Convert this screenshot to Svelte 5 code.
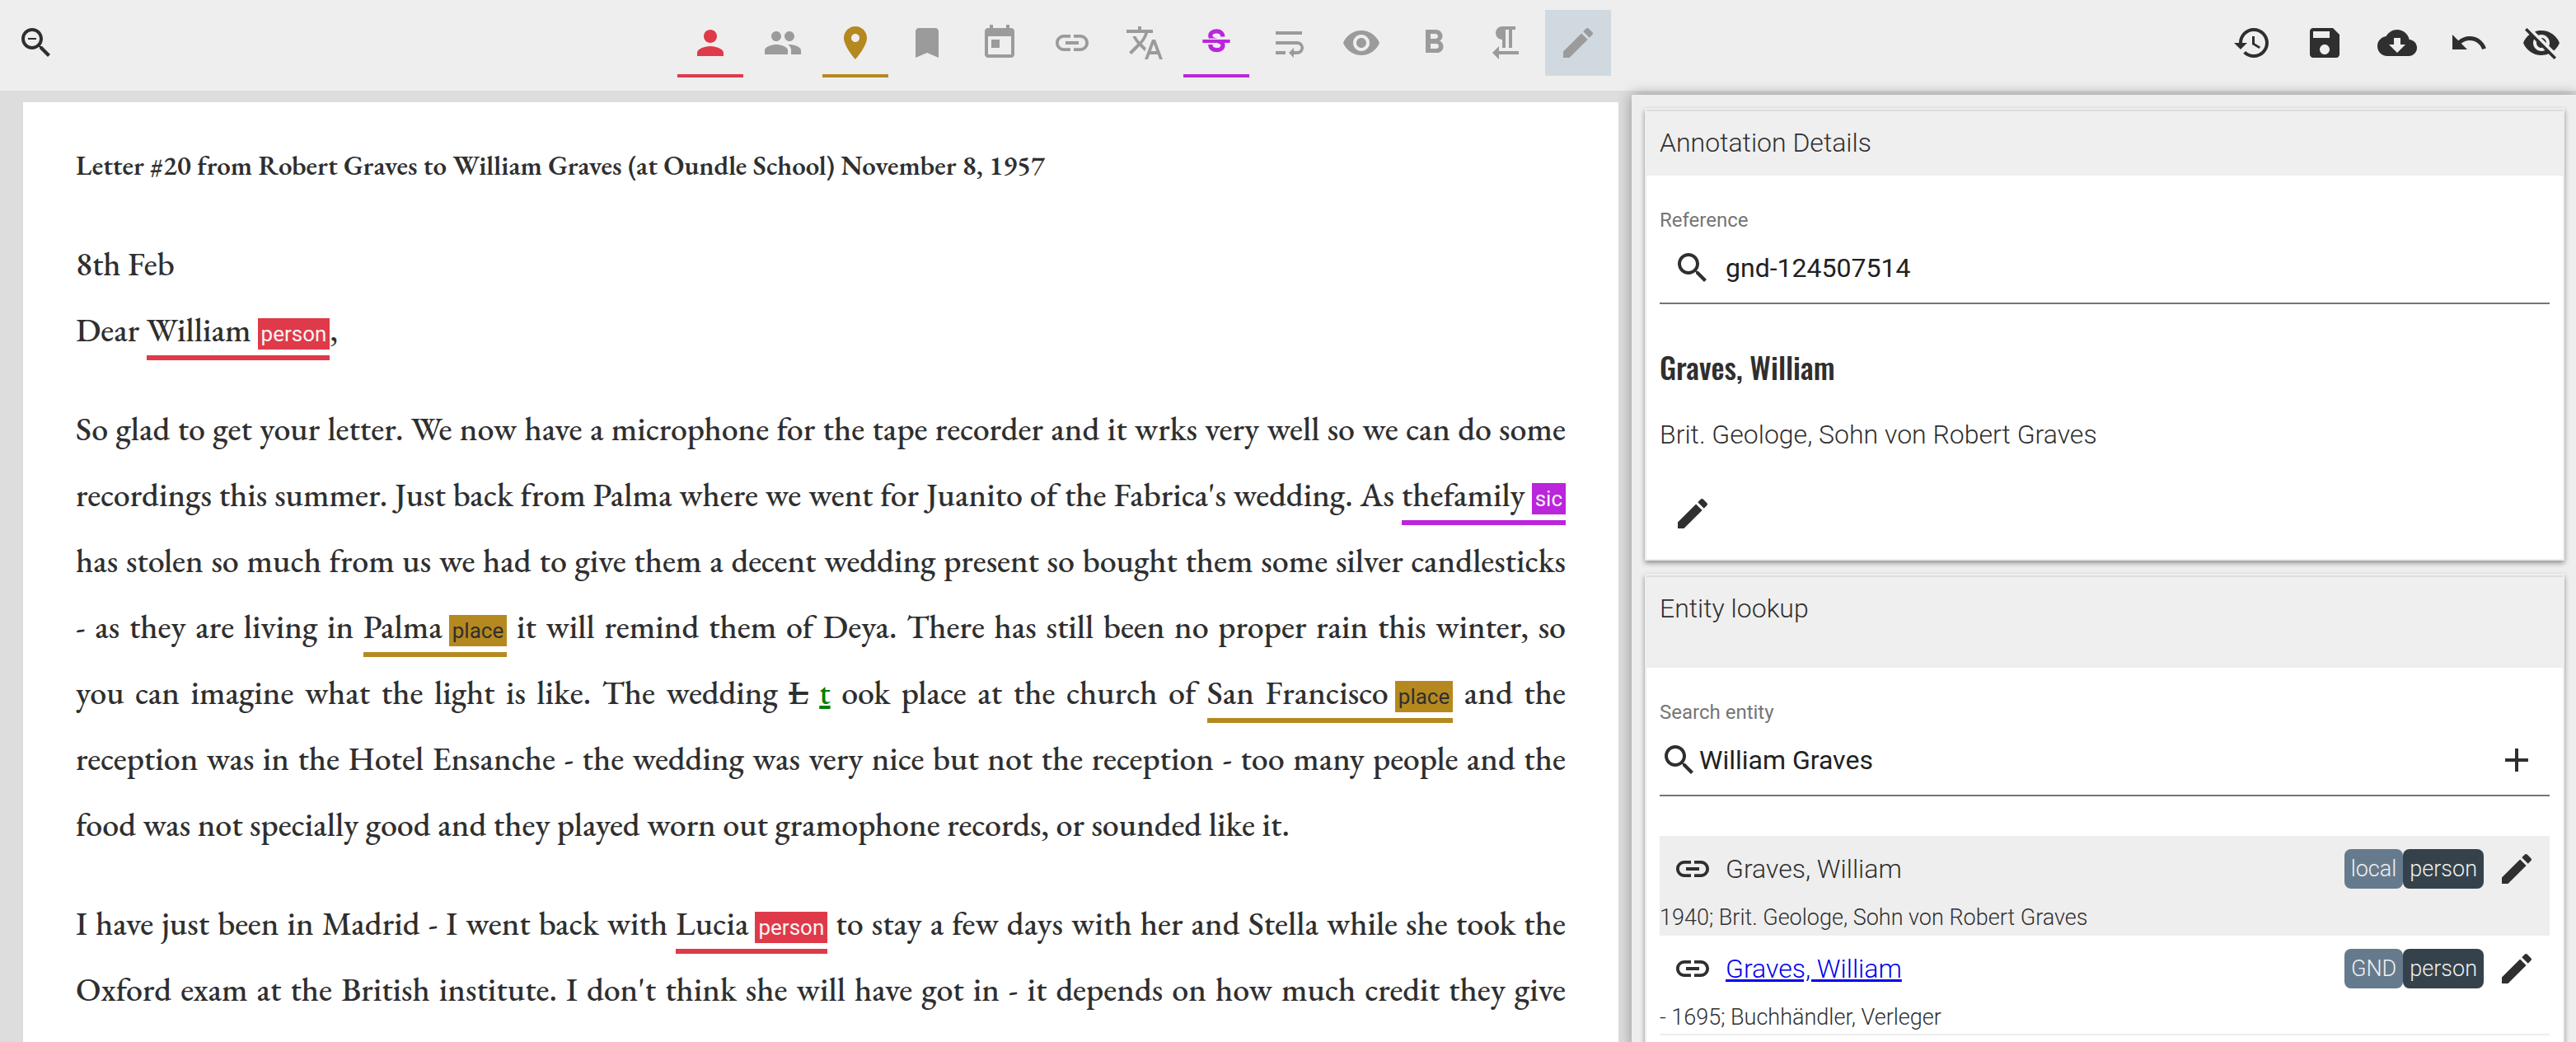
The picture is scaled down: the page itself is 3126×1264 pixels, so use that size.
<script>
  const icons = {
    zoomOut: 'M15.5 14h-.79l-.28-.27C15.41 12.59 16 11.11 16 9.5 16 5.91 13.09 3 9.5 3S3 5.91 3 9.5 5.91 16 9.5 16c1.61 0 3.09-.59 4.23-1.57l.27.28v.79l5 4.99L20.49 19l-4.99-5zm-6 0C7.01 14 5 11.99 5 9.5S7.01 5 9.5 5 14 7.01 14 9.5 11.99 14 9.5 14zM7 9h5v1H7z',
    person: 'M12 12c2.21 0 4-1.79 4-4s-1.79-4-4-4-4 1.79-4 4 1.79 4 4 4zm0 2c-2.67 0-8 1.34-8 4v2h16v-2c0-2.66-5.33-4-8-4z',
    people: 'M16 11c1.66 0 2.99-1.34 2.99-3S17.66 5 16 5c-1.66 0-3 1.34-3 3s1.34 3 3 3zm-8 0c1.66 0 2.99-1.34 2.99-3S9.66 5 8 5C6.34 5 5 6.34 5 8s1.34 3 3 3zm0 2c-2.33 0-7 1.17-7 3.5V19h14v-2.5c0-2.33-4.67-3.5-7-3.5zm8 0c-.29 0-.62.02-.97.05 1.16.84 1.97 1.97 1.97 3.45V19h6v-2.5c0-2.33-4.67-3.5-7-3.5z',
    place: 'M12 2C8.13 2 5 5.13 5 9c0 5.25 7 13 7 13s7-7.75 7-13c0-3.87-3.13-7-7-7zm0 9.5c-1.38 0-2.5-1.12-2.5-2.5s1.12-2.5 2.5-2.5 2.5 1.12 2.5 2.5-1.12 2.5-2.5 2.5z',
    bookmark: 'M17 3H7c-1.1 0-1.99.9-1.99 2L5 21l7-3 7 3V5c0-1.1-.9-2-2-2z',
    today: 'M19 3h-1V1h-2v2H8V1H6v2H5c-1.11 0-1.99.9-1.99 2L3 19c0 1.1.89 2 2 2h14c1.1 0 2-.9 2-2V5c0-1.1-.9-2-2-2zm0 16H5V8h14v11zM7 10h5v5H7z',
    link: 'M3.9 12c0-1.71 1.39-3.1 3.1-3.1h4V7H7c-2.76 0-5 2.24-5 5s2.24 5 5 5h4v-1.9H7c-1.71 0-3.1-1.39-3.1-3.1zM8 13h8v-2H8v2zm9-6h-4v1.9h4c1.71 0 3.1 1.39 3.1 3.1s-1.39 3.1-3.1 3.1h-4V17h4c2.76 0 5-2.24 5-5s-2.24-5-5-5z',
    translate: 'M12.87 15.07l-2.54-2.51.03-.03c1.74-1.94 2.98-4.17 3.71-6.53H17V4h-7V2H8v2H1v1.99h11.17C11.5 7.92 10.44 9.75 9 11.35 8.07 10.32 7.3 9.19 6.69 8h-2c.73 1.63 1.73 3.17 2.98 4.56l-5.09 5.02L4 19l5-5 3.11 3.11.76-2.04zM18.5 10h-2L12 22h2l1.12-3h4.75L21 22h2l-4.5-12zm-2.62 7l1.62-4.33L19.12 17h-3.24z',
    wrap: 'M4 19h6v-2H4v2zM20 5H4v2h16V5zm-3 6H4v2h13.25c1.1 0 2 .9 2 2s-.9 2-2 2H15v-2l-3 3 3 3v-2h2c2.21 0 4-1.79 4-4s-1.79-4-4-4z',
    eye: 'M12 4.5C7 4.5 2.73 7.61 1 12c1.73 4.39 6 7.5 11 7.5s9.27-3.11 11-7.5c-1.73-4.39-6-7.5-11-7.5zM12 17c-2.76 0-5-2.24-5-5s2.24-5 5-5 5 2.24 5 5-2.24 5-5 5zm0-8c-1.66 0-3 1.34-3 3s1.34 3 3 3 3-1.34 3-3-1.34-3-3-3z',
    bold: 'M15.6 10.79c.97-.67 1.65-1.77 1.65-2.79 0-2.26-1.75-4-4-4H7v14h7.04c2.09 0 3.71-1.7 3.71-3.79 0-1.52-.86-2.82-2.15-3.42zM10 6.5h3c.83 0 1.5.67 1.5 1.5s-.67 1.5-1.5 1.5h-3v-3zm3.5 9H10v-3h3.5c.83 0 1.5.67 1.5 1.5s-.67 1.5-1.5 1.5z',
    pilcrow: 'M10 10v5h2V4h2v11h2V4h2V2h-8C7.79 2 6 3.79 6 6s1.79 4 4 4zm-2 7v-3l-4 4 4 4v-3h12v-2H8z',
    pencil: 'M3 17.25V21h3.75L17.81 9.94l-3.75-3.75L3 17.25zM20.71 7.04c.39-.39.39-1.02 0-1.41l-2.34-2.34c-.39-.39-1.02-.39-1.41 0l-1.83 1.83 3.75 3.75 1.83-1.83z',
    history: 'M13 3c-4.97 0-9 4.03-9 9H1l3.89 3.89.07.14L9 12H6c0-3.87 3.13-7 7-7s7 3.13 7 7-3.13 7-7 7c-1.93 0-3.68-.79-4.94-2.06l-1.42 1.42C8.27 19.99 10.51 21 13 21c4.97 0 9-4.03 9-9s-4.03-9-9-9zm-1 5v5l4.28 2.54.72-1.21-3.5-2.08V8H12z',
    save: 'M17 3H5c-1.11 0-2 .9-2 2v14c0 1.1.89 2 2 2h14c1.1 0 2-.9 2-2V7l-4-4zm-5 16c-1.66 0-3-1.34-3-3s1.34-3 3-3 3 1.34 3 3-1.34 3-3 3zm3-10H5V5h10v4z',
    cloud: 'M19.35 10.04C18.67 6.59 15.64 4 12 4 9.11 4 6.6 5.64 5.35 8.04 2.34 8.36 0 10.91 0 14c0 3.31 2.69 6 6 6h13c2.76 0 5-2.24 5-5 0-2.64-2.05-4.78-4.65-4.96zM17 13l-5 5-5-5h3V9h4v4h3z',
    undo: 'M12.5 8c-2.65 0-5.05.99-6.9 2.6L2 7v9h9l-3.62-3.62c1.39-1.16 3.16-1.88 5.12-1.88 3.54 0 6.55 2.31 7.6 5.5l2.37-.78C21.08 11.03 17.15 8 12.5 8z',
    eyeOff: 'M12 7c2.76 0 5 2.24 5 5 0 .65-.13 1.26-.36 1.83l2.92 2.92c1.51-1.26 2.7-2.89 3.43-4.75-1.73-4.39-6-7.5-11-7.5-1.4 0-2.74.25-3.98.7l2.16 2.16C10.74 7.13 11.35 7 12 7zM2 4.27l2.28 2.28.46.46C3.08 8.3 1.78 10.02 1 12c1.73 4.39 6 7.5 11 7.5 1.55 0 3.03-.3 4.38-.84l.42.42L19.73 22 21 20.73 3.27 3 2 4.27zM7.53 9.8l1.55 1.55c-.05.21-.08.43-.08.65 0 1.66 1.34 3 3 3 .22 0 .44-.03.65-.08l1.55 1.55c-.67.33-1.41.53-2.2.53-2.76 0-5-2.24-5-5 0-.79.2-1.53.53-2.2zm4.31-.78l3.15 3.15.02-.16c0-1.66-1.34-3-3-3l-.17.01z',
    search: 'M15.5 14h-.79l-.28-.27C15.41 12.59 16 11.11 16 9.5 16 5.91 13.09 3 9.5 3S3 5.91 3 9.5 5.91 16 9.5 16c1.61 0 3.09-.59 4.23-1.57l.27.28v.79l5 4.99L20.49 19l-4.99-5zm-6 0C7.01 14 5 11.99 5 9.5S7.01 5 9.5 5 14 7.01 14 9.5 11.99 14 9.5 14z',
    add: 'M19 13h-6v6h-2v-6H5v-2h6V5h2v6h6v2z'
  };

  const annotationTools = [
    { icon: 'person', label: 'Person', tone: 'person' },
    { icon: 'people', label: 'Organization' },
    { icon: 'place', label: 'Place', tone: 'place' },
    { icon: 'bookmark', label: 'Term' },
    { icon: 'today', label: 'Date' },
    { icon: 'link', label: 'Link' },
    { icon: 'translate', label: 'Foreign language' },
    { icon: 'strike', label: 'Correction', tone: 'sic' },
    { icon: 'wrap', label: 'Line break' },
    { icon: 'eye', label: 'Regularization' },
    { icon: 'bold', label: 'Highlight' },
    { icon: 'pilcrow', label: 'Paragraph' },
    { icon: 'pencil', label: 'Edit', tone: 'pressed' }
  ];

  const documentTools = [
    { icon: 'history', label: 'History' },
    { icon: 'save', label: 'Save' },
    { icon: 'cloud', label: 'Download' },
    { icon: 'undo', label: 'Undo' },
    { icon: 'eyeOff', label: 'Hide annotations' }
  ];

  const results = [
    { name: 'Graves, William', source: 'local', details: '1940; Brit. Geologe, Sohn von Robert Graves', selected: true },
    { name: 'Graves, William', source: 'GND', details: '- 1695; Buchhändler, Verleger', href: '#gnd' }
  ];

  let reference = $state('gnd-124507514');
  let query = $state('William Graves');
</script>

{#snippet icon(name)}
  <svg class="icon" viewBox="0 0 24 24" aria-hidden="true">
    {#if name === 'strike'}
      <path class="curve" d="M15.9 8.3C15.9 6.1 14.4 4.95 12.2 4.95S8.4 6 8.4 7.6c0 3.9 7.6 2.2 7.6 5.9 0 1.8-1.5 2.85-3.8 2.85s-3.8-1.25-3.8-3.35" />
      <path class="gap" d="M6 9.3h12v.7H6z" />
      <path d="M3.67 10h16.66v2H3.67z" />
    {:else}
      <path d={icons[name]} />
    {/if}
  </svg>
{/snippet}

{#snippet mark(text, kind)}<span class="mark {kind}">{text}<span class="tag">{kind}</span></span>{/snippet}

<div class="app">
  <header class="toolbar">
    <div class="tools"><button class="tool" aria-label="Zoom out">{@render icon('zoomOut')}</button></div>
    <div class="tools annotate">
      {#each annotationTools as tool}
        <button class="tool muted {tool.tone ?? ''}" aria-label={tool.label}>{@render icon(tool.icon)}</button>
      {/each}
    </div>
    <div class="tools document">
      {#each documentTools as tool}
        <button class="tool" aria-label={tool.label}>{@render icon(tool.icon)}</button>
      {/each}
    </div>
  </header>

  <div class="workspace">
    <main class="letter">
      <h1>Letter #20 from Robert Graves to William Graves (at Oundle School) November 8, 1957</h1>
      <div class="opening">
        <p>8th Feb</p>
        <p>Dear {@render mark('William', 'person')},</p>
      </div>
      <p>
        So glad to get your letter. We now have a microphone for the tape recorder and it wrks very well so we can do some
        recordings this summer. Just back from Palma where we went for Juanito of the Fabrica's wedding. As
        {@render mark('thefamily', 'sic')} has stolen so much from us we had to give them a decent wedding present so bought
        them some silver candlesticks <span class="together">- as</span> they are living in
        {@render mark('Palma', 'place')} it will remind them of Deya. There has still been no proper rain this winter, so
        you&nbsp;can imagine what the light is like. The wedding <del>L</del> <ins>t</ins> ook place at the church of
        {@render mark('San Francisco', 'place')} and the reception&nbsp;was in the Hotel Ensanche - the wedding was very
        nice but not the reception - too many people and the food&nbsp;was not specially good and they played worn out
        gramophone records, or sounded like it.
      </p>
      <p class="running">
        I have just been in Madrid - I went back with {@render mark('Lucia', 'person')} to stay a few days with her and
        Stella while she took the Oxford exam at the British institute. I don't think she will have got in - it depends on
        how much credit they give
      </p>
    </main>

    <aside class="sidebar">
      <section class="card">
        <h2>Annotation Details</h2>
        <div class="body">
          <label for="reference">Reference</label>
          <div class="field">
            <button class="small" aria-label="Look up reference">{@render icon('search')}</button>
            <input id="reference" type="text" bind:value={reference} />
          </div>
          <h3>Graves, William</h3>
          <p class="note">Brit. Geologe, Sohn von Robert Graves</p>
          <button class="small" aria-label="Edit entity">{@render icon('pencil')}</button>
        </div>
      </section>

      <section class="card">
        <h2 class="tall">Entity lookup</h2>
        <div class="body">
          <label for="query">Search entity</label>
          <div class="field">
            {@render icon('search')}
            <input id="query" type="text" bind:value={query} />
            <button class="small" aria-label="Add entity">{@render icon('add')}</button>
          </div>
          <ul>
            {#each results as result}
              <li class:selected={result.selected}>
                <div class="entry">
                  <button class="small" aria-label="Link entity">{@render icon('link')}</button>
                  {#if result.href}
                    <a class="name" href={result.href}>{result.name}</a>
                  {:else}
                    <span class="name">{result.name}</span>
                  {/if}
                  <span class="badge">{result.source}</span>
                  <span class="badge dark">person</span>
                  <button class="small" aria-label="Edit entry">{@render icon('pencil')}</button>
                </div>
                <div class="details">{result.details}</div>
              </li>
            {/each}
          </ul>
        </div>
      </section>
    </aside>
  </div>
</div>

<style>
  :global(body) {
    background: #ddd;
  }

  .app {
    height: 100vh;
    display: flex;
    flex-direction: column;
    overflow: hidden;
    color: #2f2f2f;
    font: 300 32px/40px Roboto, "Liberation Sans", sans-serif;
  }

  .app * {
    box-sizing: border-box;
  }

  h1, h2, h3, p, ul {
    margin: 0;
    padding: 0;
  }

  button {
    display: flex;
    align-items: center;
    justify-content: center;
    padding: 0;
    border: 0;
    background: none;
    color: inherit;
  }

  .icon {
    flex: none;
    width: 48px;
    height: 48px;
    fill: currentColor;
  }

  .curve {
    fill: none;
    stroke: currentColor;
    stroke-width: 2.6;
  }

  .gap {
    fill: #eee;
  }

  .toolbar {
    flex: none;
    display: grid;
    grid-template-columns: 1fr auto 1fr;
    height: 110px;
    padding: 12px 2px 0 4px;
    background: #eee;
  }

  .tools {
    display: flex;
    justify-content: space-between;
  }

  /* the right margin centres the group nearer the letter column */
  .annotate {
    width: 1133px;
    margin-right: 351px;
  }

  .document {
    width: 431px;
    justify-self: end;
  }

  .tool {
    position: relative;
    width: 80px;
    height: 80px;
  }

  .muted {
    color: #9b9b9b;
  }

  .tool.person {
    color: #df3a4a;
  }

  .tool.place {
    color: #b58920;
  }

  .tool.sic {
    color: #bb25db;
  }

  .tool.person::after,
  .tool.place::after,
  .tool.sic::after {
    content: "";
    position: absolute;
    left: 0;
    right: 0;
    bottom: -2px;
    height: 4px;
    background: currentColor;
  }

  .pressed {
    background: #d1d9e0;
  }

  .workspace {
    flex: 1;
    min-height: 0;
    display: grid;
    grid-template-columns: minmax(0, 1964fr) minmax(0, 1146fr);
    gap: 16px;
    background: #ddd;
  }

  .letter {
    margin: 14px 0 0 28px;
    padding: 36px 64px 0;
    overflow: hidden;
    background: #fff;
    font: 500 40px/80px "EB Garamond", "Liberation Serif", serif;
    text-align: justify;
  }

  h1 {
    margin-bottom: 38px;
    font-size: 33px;
    line-height: 82px;
    font-weight: 600;
    text-align: left;
  }

  .opening {
    margin-bottom: 40px;
  }

  .letter > p {
    margin-bottom: 40px;
  }

  .running {
    text-align-last: justify;
  }

  .together {
    white-space: nowrap;
  }

  .mark {
    padding-bottom: 5px;
    border-bottom: 6px solid;
  }

  .mark.person {
    border-color: #df3a4a;
  }

  .mark.place {
    border-color: #b58920;
  }

  .mark.sic {
    border-color: #bb25db;
  }

  .tag {
    display: inline-block;
    margin-left: 8px;
    padding: 0 4px;
    color: #f4f4f4;
    font: 400 26px/38px Roboto, "Liberation Sans", sans-serif;
  }

  .person .tag {
    background: #df3a4a;
  }

  .place .tag {
    background: #b58920;
    color: #2f2f2f;
  }

  .sic .tag {
    background: #bb25db;
  }

  ins {
    color: #008000;
  }

  .sidebar {
    margin-top: 5px;
    padding: 16px 14px 0 16px;
    display: flex;
    flex-direction: column;
    gap: 16px;
    background: #eee;
    box-shadow: 0 0 16px rgba(0, 0, 0, 0.35);
  }

  .card {
    flex: none;
    border: 2px solid #eee;
    background: #fff;
    box-shadow: 0 3px 6px rgba(0, 0, 0, 0.4);
  }

  h2 {
    height: 80px;
    padding: 18px 16px 0;
    border-top: 2px solid #ddd;
    background: #efefef;
    font-size: 32px;
    font-weight: 300;
  }

  .tall {
    height: 112px;
  }

  .body {
    padding: 38px 16px 15px;
  }

  label {
    display: block;
    color: #757575;
    font-size: 24px;
    line-height: 32px;
    font-weight: 400;
  }

  .field {
    display: flex;
    align-items: center;
    height: 86px;
    border-bottom: 2px solid #757575;
  }

  input {
    flex: 1;
    min-width: 0;
    padding: 0;
    border: 0;
    outline: 0;
    background: none;
    color: #212121;
    font: 400 32px/40px Roboto, "Liberation Sans", sans-serif;
  }

  .small {
    flex: none;
    width: 80px;
    height: 80px;
  }

  h3 {
    margin-top: 52px;
    font: 500 36px/48px Oswald, "Liberation Sans Narrow", "Liberation Sans", sans-serif;
  }

  .note {
    margin: 38px 0 36px;
  }

  ul {
    margin-top: 48px;
    list-style: none;
  }

  li {
    height: 121px;
    border-bottom: 2px solid #eee;
  }

  .selected {
    background: #eee;
  }

  .entry {
    display: flex;
    align-items: center;
    height: 80px;
  }

  .name {
    margin-right: auto;
  }

  a {
    color: #00e;
  }

  .badge {
    padding: 0 8px;
    border-radius: 8px;
    background: #657b8d;
    color: #f0f0f0;
    font-size: 27px;
    line-height: 48px;
  }

  .dark {
    background: #35424b;
  }

  .details {
    font-size: 27px;
    line-height: 38px;
  }
</style>
